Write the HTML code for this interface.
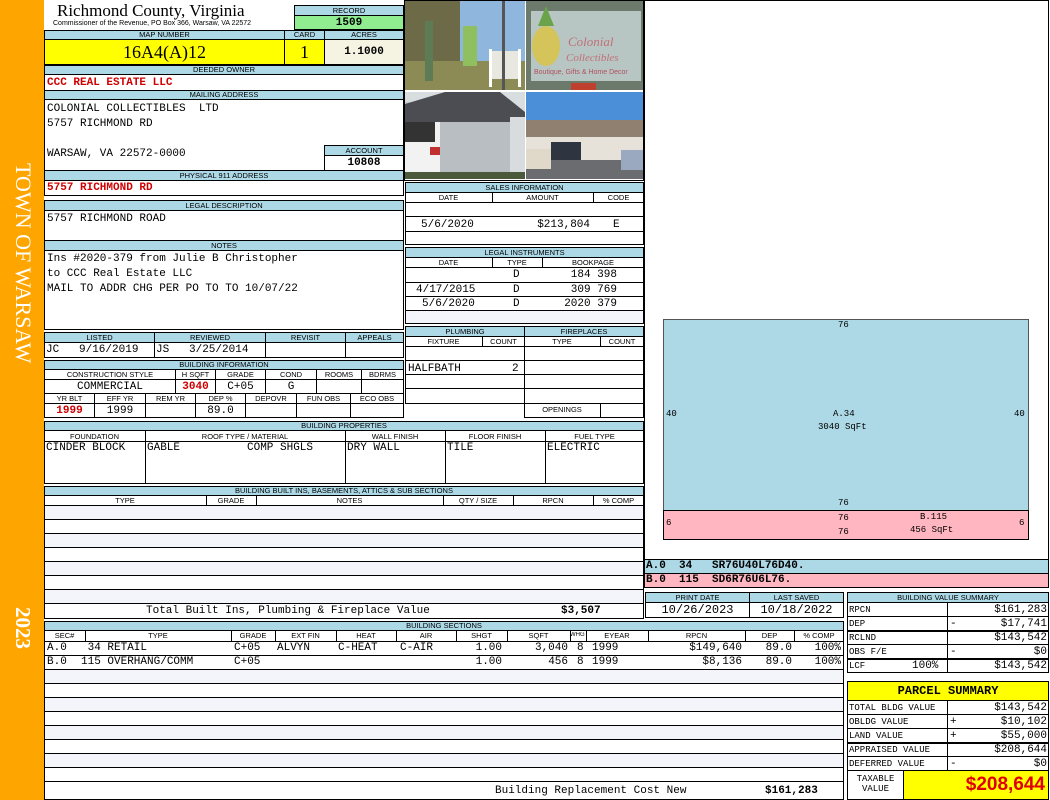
<!DOCTYPE html>
<html><head><meta charset="utf-8"><style>
*{margin:0;padding:0}
body{width:1050px;height:800px;position:relative;background:#fff;overflow:hidden;font-family:"Liberation Sans",sans-serif}
.a{position:absolute;box-sizing:border-box}
.h{position:absolute;box-sizing:border-box;background:#add8e6;border:1px solid #000;font-size:7.5px;text-align:center;line-height:8px;color:#000;overflow:hidden;white-space:nowrap}
.c{position:absolute;box-sizing:border-box;border:1px solid #000;background:#fff}
.m{position:absolute;font-family:"Liberation Mono",monospace;font-size:11px;white-space:pre;line-height:12px}
.rt{text-align:right}
.r{color:#d00000;font-weight:bold}
.s{position:absolute;font-family:"Liberation Mono",monospace;font-size:9px;white-space:pre;line-height:10px}
.ln{position:absolute;height:1px;background:#000}
.vl{position:absolute;width:1px;background:#000}
</style></head><body>
<div class="a" style="left:0;top:0;width:44px;height:800px;background:#ffa500"></div>
<div class="a" style="left:7px;top:146px;width:32px;height:234px;writing-mode:vertical-rl;color:#fff;font:22px 'Liberation Serif',serif;text-align:center;line-height:32px">TOWN OF WARSAW</div>
<div class="a" style="left:7px;top:600px;width:32px;height:56px;writing-mode:vertical-rl;color:#fff;font:bold 21px 'Liberation Serif',serif;text-align:center;line-height:32px">2023</div>

<div class="a" style="left:57px;top:1px;font:17px 'Liberation Serif',serif;line-height:19px">Richmond County, Virginia</div>
<div class="a" style="left:53px;top:20px;font:7px 'Liberation Sans';line-height:7px;white-space:nowrap">Commissioner of the Revenue, PO Box 366, Warsaw, VA 22572</div>
<div class="h" style="left:294px;top:5px;width:110px;height:11px;line-height:9px">RECORD</div>
<div class="a" style="left:294px;top:15px;width:110px;height:15px;background:#90ee90;border:1px solid #000;font:bold 11px 'Liberation Mono';text-align:center;line-height:14px">1509</div>

<div class="h" style="left:44px;top:30px;width:241px;height:10px">MAP NUMBER</div>
<div class="h" style="left:284px;top:30px;width:41px;height:10px">CARD</div>
<div class="h" style="left:324px;top:30px;width:80px;height:10px">ACRES</div>
<div class="a" style="left:44px;top:39px;width:241px;height:26px;background:#ffff00;border:1px solid #000;font:18px 'Liberation Serif';text-align:center;line-height:25px">16A4(A)12</div>
<div class="a" style="left:284px;top:39px;width:41px;height:26px;background:#ffff00;border:1px solid #000;font:18px 'Liberation Serif';text-align:center;line-height:25px">1</div>
<div class="a" style="left:324px;top:39px;width:80px;height:26px;background:#f5f3e1;border:1px solid #000;font:bold 11px 'Liberation Mono';text-align:center;line-height:25px">1.1000</div>

<div class="h" style="left:44px;top:65px;width:360px;height:10px">DEEDED OWNER</div>
<div class="c" style="left:44px;top:74px;width:360px;height:17px"></div>
<div class="m r" style="left:47px;top:77px">CCC REAL ESTATE LLC</div>
<div class="h" style="left:44px;top:90px;width:360px;height:10px">MAILING ADDRESS</div>
<div class="c" style="left:44px;top:99px;width:360px;height:72px"></div>
<div class="m" style="left:47px;top:103px">COLONIAL COLLECTIBLES  LTD</div>
<div class="m" style="left:47px;top:118px">5757 RICHMOND RD</div>
<div class="m" style="left:47px;top:148px">WARSAW, VA 22572-0000</div>
<div class="h" style="left:324px;top:145px;width:80px;height:11px;line-height:9px">ACCOUNT</div>
<div class="c" style="left:324px;top:155px;width:80px;height:16px;font:bold 11px 'Liberation Mono';text-align:center;line-height:15px">10808</div>
<div class="h" style="left:44px;top:170px;width:360px;height:11px;line-height:9px">PHYSICAL 911 ADDRESS</div>
<div class="c" style="left:44px;top:180px;width:360px;height:16px"></div>
<div class="m r" style="left:47px;top:182px">5757 RICHMOND RD</div>

<div class="h" style="left:44px;top:200px;width:360px;height:11px;line-height:9px">LEGAL DESCRIPTION</div>
<div class="c" style="left:44px;top:210px;width:360px;height:31px"></div>
<div class="m" style="left:47px;top:213px">5757 RICHMOND ROAD</div>
<div class="h" style="left:44px;top:240px;width:360px;height:11px;line-height:9px">NOTES</div>
<div class="c" style="left:44px;top:250px;width:360px;height:80px"></div>
<div class="m" style="left:47px;top:253px">Ins #2020-379 from Julie B Christopher</div>
<div class="m" style="left:47px;top:268px">to CCC Real Estate LLC</div>
<div class="m" style="left:47px;top:283px">MAIL TO ADDR CHG PER PO TO TO 10/07/22</div>

<div class="h" style="left:44px;top:332px;width:111px;height:11px;line-height:9px">LISTED</div>
<div class="h" style="left:154px;top:332px;width:112px;height:11px;line-height:9px">REVIEWED</div>
<div class="h" style="left:265px;top:332px;width:81px;height:11px;line-height:9px">REVISIT</div>
<div class="h" style="left:345px;top:332px;width:59px;height:11px;line-height:9px">APPEALS</div>
<div class="c" style="left:44px;top:342px;width:111px;height:16px"></div>
<div class="c" style="left:154px;top:342px;width:112px;height:16px"></div>
<div class="c" style="left:265px;top:342px;width:81px;height:16px"></div>
<div class="c" style="left:345px;top:342px;width:59px;height:16px"></div>
<div class="m" style="left:46px;top:344px">JC   9/16/2019</div>
<div class="m" style="left:156px;top:344px">JS   3/25/2014</div>

<div class="h" style="left:44px;top:360px;width:360px;height:10px">BUILDING INFORMATION</div>
<div class="h" style="left:44px;top:369px;width:132px;height:11px;line-height:9px;background:#fff">CONSTRUCTION STYLE</div>
<div class="h" style="left:175px;top:369px;width:41px;height:11px;line-height:9px;background:#fff">H SQFT</div>
<div class="h" style="left:215px;top:369px;width:51px;height:11px;line-height:9px;background:#fff">GRADE</div>
<div class="h" style="left:265px;top:369px;width:52px;height:11px;line-height:9px;background:#fff">COND</div>
<div class="h" style="left:316px;top:369px;width:46px;height:11px;line-height:9px;background:#fff">ROOMS</div>
<div class="h" style="left:361px;top:369px;width:43px;height:11px;line-height:9px;background:#fff">BDRMS</div>
<div class="c" style="left:44px;top:379px;width:132px;height:15px;font:11px 'Liberation Mono';text-align:center;line-height:14px">COMMERCIAL</div>
<div class="c r" style="left:175px;top:379px;width:41px;height:15px;font:bold 11px 'Liberation Mono';text-align:center;line-height:14px">3040</div>
<div class="c" style="left:215px;top:379px;width:51px;height:15px;font:11px 'Liberation Mono';text-align:center;line-height:14px">C+05</div>
<div class="c" style="left:265px;top:379px;width:52px;height:15px;font:11px 'Liberation Mono';text-align:center;line-height:14px">G</div>
<div class="c" style="left:316px;top:379px;width:46px;height:15px"></div>
<div class="c" style="left:361px;top:379px;width:43px;height:15px"></div>
<div class="h" style="left:44px;top:393px;width:51px;height:11px;line-height:9px;background:#fff">YR BLT</div>
<div class="h" style="left:94px;top:393px;width:52px;height:11px;line-height:9px;background:#fff">EFF YR</div>
<div class="h" style="left:145px;top:393px;width:51px;height:11px;line-height:9px;background:#fff">REM YR</div>
<div class="h" style="left:195px;top:393px;width:51px;height:11px;line-height:9px;background:#fff">DEP %</div>
<div class="h" style="left:245px;top:393px;width:52px;height:11px;line-height:9px;background:#fff">DEPOVR</div>
<div class="h" style="left:296px;top:393px;width:55px;height:11px;line-height:9px;background:#fff">FUN OBS</div>
<div class="h" style="left:350px;top:393px;width:54px;height:11px;line-height:9px;background:#fff">ECO OBS</div>
<div class="c r" style="left:44px;top:403px;width:51px;height:15px;font:bold 11px 'Liberation Mono';text-align:center;line-height:14px">1999</div>
<div class="c" style="left:94px;top:403px;width:52px;height:15px;font:11px 'Liberation Mono';text-align:center;line-height:14px">1999</div>
<div class="c" style="left:145px;top:403px;width:51px;height:15px"></div>
<div class="c" style="left:195px;top:403px;width:51px;height:15px;font:11px 'Liberation Mono';text-align:center;line-height:14px">89.0</div>
<div class="c" style="left:245px;top:403px;width:52px;height:15px"></div>
<div class="c" style="left:296px;top:403px;width:55px;height:15px"></div>
<div class="c" style="left:350px;top:403px;width:54px;height:15px"></div>

<div class="h" style="left:44px;top:421px;width:600px;height:10px">BUILDING PROPERTIES</div>
<div class="c" style="left:44px;top:430px;width:600px;height:54px"></div>
<div class="ln" style="left:44px;top:441px;width:600px"></div>
<div class="vl" style="left:145px;top:430px;height:54px"></div>
<div class="vl" style="left:345px;top:430px;height:54px"></div>
<div class="vl" style="left:445px;top:430px;height:54px"></div>
<div class="vl" style="left:545px;top:430px;height:54px"></div>
<div class="a" style="top:432px;left:44px;width:101px;font-size:7.5px;text-align:center">FOUNDATION</div>
<div class="a" style="top:432px;left:145px;width:200px;font-size:7.5px;text-align:center">ROOF TYPE / MATERIAL</div>
<div class="a" style="top:432px;left:345px;width:100px;font-size:7.5px;text-align:center">WALL FINISH</div>
<div class="a" style="top:432px;left:445px;width:100px;font-size:7.5px;text-align:center">FLOOR FINISH</div>
<div class="a" style="top:432px;left:545px;width:99px;font-size:7.5px;text-align:center">FUEL TYPE</div>
<div class="m" style="left:46px;top:442px">CINDER BLOCK</div>
<div class="m" style="left:147px;top:442px">GABLE</div>
<div class="m" style="left:247px;top:442px">COMP SHGLS</div>
<div class="m" style="left:347px;top:442px">DRY WALL</div>
<div class="m" style="left:447px;top:442px">TILE</div>
<div class="m" style="left:547px;top:442px">ELECTRIC</div>

<div class="h" style="left:44px;top:486px;width:600px;height:10px">BUILDING BUILT INS, BASEMENTS, ATTICS &amp; SUB SECTIONS</div>
<div class="c" style="left:44px;top:495px;width:600px;height:124px"></div>
<div class="a" style="left:45px;top:506px;width:598px;height:13px;background:#f3f5fa"></div>
<div class="a" style="left:45px;top:534px;width:598px;height:13px;background:#f3f5fa"></div>
<div class="a" style="left:45px;top:562px;width:598px;height:13px;background:#f3f5fa"></div>
<div class="a" style="left:45px;top:590px;width:598px;height:13px;background:#f3f5fa"></div>
<div class="ln" style="left:44px;top:505px;width:600px"></div>
<div class="ln" style="left:44px;top:519px;width:600px"></div>
<div class="ln" style="left:44px;top:533px;width:600px"></div>
<div class="ln" style="left:44px;top:547px;width:600px"></div>
<div class="ln" style="left:44px;top:561px;width:600px"></div>
<div class="ln" style="left:44px;top:575px;width:600px"></div>
<div class="ln" style="left:44px;top:589px;width:600px"></div>
<div class="ln" style="left:44px;top:603px;width:600px"></div>
<div class="vl" style="left:206px;top:495px;height:10px"></div>
<div class="vl" style="left:256px;top:495px;height:10px"></div>
<div class="vl" style="left:443px;top:495px;height:10px"></div>
<div class="vl" style="left:513px;top:495px;height:10px"></div>
<div class="vl" style="left:593px;top:495px;height:10px"></div>
<div class="a" style="top:496px;left:44px;width:162px;font-size:7.5px;text-align:center">TYPE</div>
<div class="a" style="top:496px;left:206px;width:50px;font-size:7.5px;text-align:center">GRADE</div>
<div class="a" style="top:496px;left:256px;width:187px;font-size:7.5px;text-align:center">NOTES</div>
<div class="a" style="top:496px;left:443px;width:70px;font-size:7.5px;text-align:center">QTY / SIZE</div>
<div class="a" style="top:496px;left:513px;width:80px;font-size:7.5px;text-align:center">RPCN</div>
<div class="a" style="top:496px;left:593px;width:51px;font-size:7.5px;text-align:center">% COMP</div>
<div class="m" style="left:146px;top:605px">Total Built Ins, Plumbing &amp; Fireplace Value</div>
<div class="m" style="left:561px;top:605px;font-weight:bold">$3,507</div>

<div class="h" style="left:44px;top:621px;width:800px;height:10px">BUILDING SECTIONS</div>
<div class="c" style="left:44px;top:630px;width:800px;height:170px"></div>
<div class="ln" style="left:44px;top:641px;width:800px"></div>
<div class="ln" style="left:44px;top:655px;width:800px"></div>
<div class="ln" style="left:44px;top:669px;width:800px"></div>
<div class="a" style="left:45px;top:670px;width:798px;height:13px;background:#f3f5fa"></div>
<div class="ln" style="left:44px;top:683px;width:800px"></div>
<div class="ln" style="left:44px;top:697px;width:800px"></div>
<div class="a" style="left:45px;top:698px;width:798px;height:13px;background:#f3f5fa"></div>
<div class="ln" style="left:44px;top:711px;width:800px"></div>
<div class="ln" style="left:44px;top:725px;width:800px"></div>
<div class="a" style="left:45px;top:726px;width:798px;height:13px;background:#f3f5fa"></div>
<div class="ln" style="left:44px;top:739px;width:800px"></div>
<div class="ln" style="left:44px;top:753px;width:800px"></div>
<div class="a" style="left:45px;top:754px;width:798px;height:13px;background:#f3f5fa"></div>
<div class="ln" style="left:44px;top:767px;width:800px"></div>
<div class="ln" style="left:44px;top:781px;width:800px"></div>
<div class="vl" style="left:85px;top:630px;height:11px"></div>
<div class="vl" style="left:231px;top:630px;height:11px"></div>
<div class="vl" style="left:275px;top:630px;height:11px"></div>
<div class="vl" style="left:336px;top:630px;height:11px"></div>
<div class="vl" style="left:396px;top:630px;height:11px"></div>
<div class="vl" style="left:456px;top:630px;height:11px"></div>
<div class="vl" style="left:507px;top:630px;height:11px"></div>
<div class="vl" style="left:570px;top:630px;height:11px"></div>
<div class="vl" style="left:586px;top:630px;height:11px"></div>
<div class="vl" style="left:648px;top:630px;height:11px"></div>
<div class="vl" style="left:745px;top:630px;height:11px"></div>
<div class="vl" style="left:794px;top:630px;height:11px"></div>
<div class="a" style="top:631px;left:44px;width:41px;font-size:7.5px;text-align:center">SEC#</div>
<div class="a" style="top:631px;left:85px;width:146px;font-size:7.5px;text-align:center">TYPE</div>
<div class="a" style="top:631px;left:231px;width:44px;font-size:7.5px;text-align:center">GRADE</div>
<div class="a" style="top:631px;left:275px;width:61px;font-size:7.5px;text-align:center">EXT FIN</div>
<div class="a" style="top:631px;left:336px;width:60px;font-size:7.5px;text-align:center">HEAT</div>
<div class="a" style="top:631px;left:396px;width:60px;font-size:7.5px;text-align:center">AIR</div>
<div class="a" style="top:631px;left:456px;width:51px;font-size:7.5px;text-align:center">SHGT</div>
<div class="a" style="top:631px;left:507px;width:63px;font-size:7.5px;text-align:center">SQFT</div>
<div class="a" style="top:632px;left:570px;width:16px;font-size:6px;text-align:center;overflow:hidden">WHGT</div>
<div class="a" style="top:631px;left:586px;width:62px;font-size:7.5px;text-align:center">EYEAR</div>
<div class="a" style="top:631px;left:648px;width:97px;font-size:7.5px;text-align:center">RPCN</div>
<div class="a" style="top:631px;left:745px;width:49px;font-size:7.5px;text-align:center">DEP</div>
<div class="a" style="top:631px;left:794px;width:50px;font-size:7.5px;text-align:center">% COMP</div>
<div class="m" style="left:47px;top:642px">A.0</div>
<div class="m" style="left:81px;top:642px"> 34 RETAIL</div>
<div class="m" style="left:234px;top:642px">C+05</div>
<div class="m" style="left:277px;top:642px">ALVYN</div>
<div class="m" style="left:338px;top:642px">C-HEAT</div>
<div class="m" style="left:400px;top:642px">C-AIR</div>
<div class="m rt" style="left:456px;top:642px;width:46px">1.00</div>
<div class="m rt" style="left:507px;top:642px;width:61px">3,040</div>
<div class="m" style="left:577px;top:642px">8</div>
<div class="m" style="left:592px;top:642px">1999</div>
<div class="m rt" style="left:648px;top:642px;width:94px">$149,640</div>
<div class="m rt" style="left:745px;top:642px;width:47px">89.0</div>
<div class="m rt" style="left:794px;top:642px;width:47px">100%</div>
<div class="m" style="left:47px;top:656px">B.0</div>
<div class="m" style="left:81px;top:656px">115 OVERHANG/COMM</div>
<div class="m" style="left:234px;top:656px">C+05</div>
<div class="m rt" style="left:456px;top:656px;width:46px">1.00</div>
<div class="m rt" style="left:507px;top:656px;width:61px">456</div>
<div class="m" style="left:577px;top:656px">8</div>
<div class="m" style="left:592px;top:656px">1999</div>
<div class="m rt" style="left:648px;top:656px;width:94px">$8,136</div>
<div class="m rt" style="left:745px;top:656px;width:47px">89.0</div>
<div class="m rt" style="left:794px;top:656px;width:47px">100%</div>
<div class="m" style="left:495px;top:785px">Building Replacement Cost New</div>
<div class="m" style="left:765px;top:785px;font-weight:bold">$161,283</div>

<div class="a" style="left:404px;top:0;width:240px;height:181px;background:#fff;border:1px solid #000"></div>
<svg class="a" style="left:405px;top:1px" width="120" height="89"><rect width="120" height="89" fill="#8fb6dc"/><rect x="0" y="0" width="55" height="60" fill="#6d6a48"/><rect y="60" width="120" height="29" fill="#8c8a55"/><rect x="20" y="20" width="8" height="60" fill="#5d7b55"/><rect x="58" y="25" width="14" height="40" fill="#8fbf5f"/><rect x="85" y="50" width="30" height="28" fill="#e8e8e0"/><rect x="84" y="48" width="3" height="38" fill="#fff"/><rect x="113" y="48" width="3" height="38" fill="#fff"/><rect x="97" y="0" width="3" height="89" fill="#555"/></svg>
<svg class="a" style="left:526px;top:1px" width="117" height="89"><rect width="117" height="89" fill="#6b7a6a"/><rect x="5" y="10" width="110" height="70" fill="#b8c6c3"/><ellipse cx="20" cy="45" rx="14" ry="20" fill="#d4c45a"/><path d="M12 25 L20 5 L28 25Z" fill="#6aa34a"/><text x="42" y="45" font-family="Liberation Serif" font-style="italic" font-size="13" fill="#c0707a">Colonial</text><text x="40" y="60" font-family="Liberation Serif" font-style="italic" font-size="11" fill="#c0707a">Collectibles</text><text x="8" y="73" font-family="Liberation Sans" font-size="7" fill="#b05060">Boutique, Gifts &amp; Home Decor</text><rect x="45" y="82" width="25" height="7" fill="#c04030"/></svg>
<svg class="a" style="left:405px;top:92px" width="120" height="87"><rect width="120" height="87" fill="#c8ccd0"/><path d="M0 0 H120 V20 L95 10 H0Z" fill="#d8dde0"/><path d="M0 12 L40 0 H95 L120 20 V30 H0Z" fill="#4b4d52"/><rect x="30" y="30" width="75" height="55" fill="#b9bec2"/><rect x="105" y="25" width="15" height="60" fill="#d8dcde"/><rect x="0" y="30" width="35" height="57" fill="#f2f2f2"/><rect x="0" y="30" width="30" height="20" fill="#333"/><rect x="25" y="55" width="10" height="8" fill="#c03030"/><rect y="80" width="120" height="7" fill="#4a5a3a"/></svg>
<svg class="a" style="left:526px;top:92px" width="117" height="87"><rect width="117" height="87" fill="#4b8fd8"/><rect y="28" width="117" height="22" fill="#8f8070"/><rect y="45" width="117" height="23" fill="#e6e2da"/><rect x="25" y="50" width="30" height="18" fill="#2e3540"/><rect y="68" width="117" height="19" fill="#6a6c70"/><rect x="0" y="57" width="25" height="20" fill="#e0d8c8"/><rect x="95" y="58" width="22" height="20" fill="#9aa8c0"/></svg>

<div class="c" style="left:405px;top:182px;width:239px;height:63px"></div>
<div class="h" style="left:405px;top:182px;width:239px;height:11px;line-height:9px">SALES INFORMATION</div>
<div class="ln" style="left:405px;top:202px;width:239px"></div>
<div class="ln" style="left:405px;top:216px;width:239px"></div>
<div class="ln" style="left:405px;top:231px;width:239px"></div>
<div class="vl" style="left:492px;top:192px;height:10px"></div>
<div class="vl" style="left:593px;top:192px;height:10px"></div>
<div class="a" style="top:193px;left:405px;width:87px;font-size:7.5px;text-align:center">DATE</div>
<div class="a" style="top:193px;left:492px;width:101px;font-size:7.5px;text-align:center">AMOUNT</div>
<div class="a" style="top:193px;left:593px;width:51px;font-size:7.5px;text-align:center">CODE</div>
<div class="m" style="left:421px;top:219px">5/6/2020</div>
<div class="m rt" style="left:492px;top:219px;width:98px">$213,804</div>
<div class="m" style="left:613px;top:219px">E</div>

<div class="c" style="left:405px;top:247px;width:239px;height:77px"></div>
<div class="h" style="left:405px;top:247px;width:239px;height:11px;line-height:9px">LEGAL INSTRUMENTS</div>
<div class="ln" style="left:405px;top:267px;width:239px"></div>
<div class="ln" style="left:405px;top:282px;width:239px"></div>
<div class="ln" style="left:405px;top:296px;width:239px"></div>
<div class="ln" style="left:405px;top:310px;width:239px"></div>
<div class="a" style="left:406px;top:311px;width:237px;height:12px;background:#f3f5fa"></div>
<div class="vl" style="left:492px;top:257px;height:10px"></div>
<div class="vl" style="left:542px;top:257px;height:10px"></div>
<div class="a" style="top:258px;left:405px;width:87px;font-size:7.5px;text-align:center">DATE</div>
<div class="a" style="top:258px;left:492px;width:50px;font-size:7.5px;text-align:center">TYPE</div>
<div class="a" style="top:258px;left:542px;width:102px;font-size:7.5px;text-align:center">BOOKPAGE</div>
<div class="m" style="left:513px;top:269px">D</div>
<div class="m rt" style="left:542px;top:269px;width:75px">184 398</div>
<div class="m" style="left:416px;top:284px">4/17/2015</div>
<div class="m" style="left:513px;top:284px">D</div>
<div class="m rt" style="left:542px;top:284px;width:75px">309 769</div>
<div class="m" style="left:422px;top:298px">5/6/2020</div>
<div class="m" style="left:513px;top:298px">D</div>
<div class="m rt" style="left:542px;top:298px;width:75px">2020 379</div>

<div class="c" style="left:405px;top:326px;width:120px;height:78px"></div>
<div class="c" style="left:524px;top:326px;width:120px;height:92px"></div>
<div class="h" style="left:405px;top:326px;width:120px;height:11px;line-height:9px">PLUMBING</div>
<div class="h" style="left:524px;top:326px;width:120px;height:11px;line-height:9px">FIREPLACES</div>
<div class="ln" style="left:405px;top:346px;width:239px"></div>
<div class="ln" style="left:405px;top:360px;width:239px"></div>
<div class="ln" style="left:405px;top:374px;width:239px"></div>
<div class="ln" style="left:405px;top:388px;width:239px"></div>
<div class="ln" style="left:524px;top:403px;width:120px"></div>
<div class="vl" style="left:482px;top:336px;height:10px"></div>
<div class="vl" style="left:600px;top:336px;height:10px"></div>
<div class="vl" style="left:600px;top:403px;height:14px"></div>
<div class="a" style="top:337px;left:405px;width:77px;font-size:7.5px;text-align:center">FIXTURE</div>
<div class="a" style="top:337px;left:482px;width:43px;font-size:7.5px;text-align:center">COUNT</div>
<div class="a" style="top:337px;left:524px;width:76px;font-size:7.5px;text-align:center">TYPE</div>
<div class="a" style="top:337px;left:600px;width:44px;font-size:7.5px;text-align:center">COUNT</div>
<div class="a" style="top:405px;left:524px;width:76px;font-size:7.5px;text-align:center">OPENINGS</div>
<div class="m" style="left:408px;top:363px">HALFBATH</div>
<div class="m" style="left:512px;top:363px">2</div>

<div class="c" style="left:644px;top:0;width:405px;height:560px"></div>
<div class="a" style="left:663px;top:319px;width:366px;height:192px;background:#add8e6;border:1px solid #555"></div>
<div class="a" style="left:663px;top:510px;width:366px;height:30px;background:#ffb6c1;border:1px solid #000"></div>
<div class="s" style="left:838px;top:320px">76</div>
<div class="s" style="left:666px;top:409px">40</div>
<div class="s" style="left:1014px;top:409px">40</div>
<div class="s" style="left:833px;top:409px">A.34</div>
<div class="s" style="left:818px;top:422px">3040 SqFt</div>
<div class="s" style="left:838px;top:498px">76</div>
<div class="s" style="left:838px;top:513px">76</div>
<div class="s" style="left:838px;top:527px">76</div>
<div class="s" style="left:666px;top:518px">6</div>
<div class="s" style="left:1019px;top:518px">6</div>
<div class="s" style="left:920px;top:512px">B.115</div>
<div class="s" style="left:910px;top:525px">456 SqFt</div>
<div class="a" style="left:644px;top:559px;width:405px;height:15px;background:#add8e6;border:1px solid #000"></div>
<div class="a" style="left:644px;top:573px;width:405px;height:15px;background:#ffb6c1;border:1px solid #000"></div>
<div class="m" style="left:646px;top:560px;font-weight:bold">A.0  34   SR76U40L76D40.</div>
<div class="m" style="left:646px;top:574px;font-weight:bold">B.0  115  SD6R76U6L76.</div>

<div class="h" style="left:645px;top:592px;width:105px;height:11px;line-height:9px">PRINT DATE</div>
<div class="h" style="left:749px;top:592px;width:95px;height:11px;line-height:9px">LAST SAVED</div>
<div class="c" style="left:645px;top:602px;width:105px;height:16px;font:12px 'Liberation Mono';text-align:center;line-height:15px">10/26/2023</div>
<div class="c" style="left:749px;top:602px;width:95px;height:16px;font:12px 'Liberation Mono';text-align:center;line-height:15px">10/18/2022</div>

<div class="h" style="left:847px;top:592px;width:202px;height:11px;line-height:9px">BUILDING VALUE SUMMARY</div>
<div class="c" style="left:847px;top:602px;width:101px;height:71px"></div>
<div class="c" style="left:947px;top:602px;width:102px;height:71px"></div>
<div class="ln" style="left:847px;top:616px;width:202px"></div>
<div class="ln" style="left:847px;top:630px;width:202px;height:2px"></div>
<div class="ln" style="left:847px;top:644px;width:202px"></div>
<div class="ln" style="left:847px;top:658px;width:202px;height:2px"></div>
<div class="s" style="left:849px;top:605px">RPCN</div>
<div class="s" style="left:849px;top:619px">DEP</div>
<div class="s" style="left:849px;top:633px">RCLND</div>
<div class="s" style="left:849px;top:647px">OBS F/E</div>
<div class="s" style="left:849px;top:661px">LCF</div>
<div class="m" style="left:912px;top:660px">100%</div>
<div class="m" style="left:950px;top:618px">-</div>
<div class="m" style="left:950px;top:646px">-</div>
<div class="m rt" style="left:947px;top:604px;width:100px">$161,283</div>
<div class="m rt" style="left:947px;top:618px;width:100px">$17,741</div>
<div class="m rt" style="left:947px;top:632px;width:100px">$143,542</div>
<div class="m rt" style="left:947px;top:646px;width:100px">$0</div>
<div class="m rt" style="left:947px;top:660px;width:100px">$143,542</div>

<div class="a" style="left:847px;top:681px;width:202px;height:20px;background:#ffff00;border:1px solid #000;font:bold 12px 'Liberation Mono';text-align:center;line-height:19px">PARCEL SUMMARY</div>
<div class="c" style="left:847px;top:700px;width:101px;height:71px"></div>
<div class="c" style="left:947px;top:700px;width:102px;height:71px"></div>
<div class="ln" style="left:847px;top:714px;width:202px"></div>
<div class="ln" style="left:847px;top:728px;width:202px"></div>
<div class="ln" style="left:847px;top:742px;width:202px;height:2px"></div>
<div class="ln" style="left:847px;top:756px;width:202px"></div>
<div class="s" style="left:849px;top:703px">TOTAL BLDG VALUE</div>
<div class="s" style="left:849px;top:717px">OBLDG VALUE</div>
<div class="s" style="left:849px;top:731px">LAND VALUE</div>
<div class="s" style="left:849px;top:745px">APPRAISED VALUE</div>
<div class="s" style="left:849px;top:759px">DEFERRED VALUE</div>
<div class="m" style="left:950px;top:716px">+</div>
<div class="m" style="left:950px;top:730px">+</div>
<div class="m" style="left:950px;top:758px">-</div>
<div class="m rt" style="left:947px;top:702px;width:100px">$143,542</div>
<div class="m rt" style="left:947px;top:716px;width:100px">$10,102</div>
<div class="m rt" style="left:947px;top:730px;width:100px">$55,000</div>
<div class="m rt" style="left:947px;top:744px;width:100px">$208,644</div>
<div class="m rt" style="left:947px;top:758px;width:100px">$0</div>
<div class="c" style="left:847px;top:770px;width:57px;height:30px"></div>
<div class="s" style="left:847px;top:774px;width:57px;text-align:center;line-height:10px">TAXABLE<br>VALUE</div>
<div class="a" style="left:903px;top:770px;width:146px;height:30px;background:#ffff00;border:1px solid #000;color:#e00000;font:bold 19px 'Liberation Sans';text-align:right;padding-right:3px;line-height:28px">$208,644</div>
</body></html>
